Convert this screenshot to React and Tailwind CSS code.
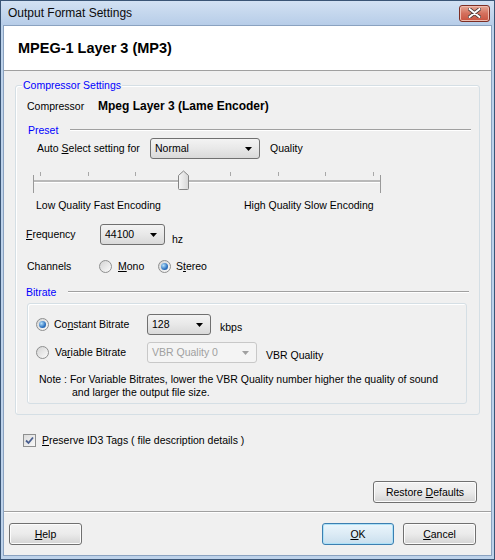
import React from "react";

function U({ children }) {
  return <span className="underline underline-offset-[1px]">{children}</span>;
}

function Arrow({ disabled }) {
  return (
    <svg width="7" height="4" viewBox="0 0 7 4" className="shrink-0">
      <path d="M0 0 H7 L3.5 4 Z" fill={disabled ? "#a0a0a0" : "#000"} />
    </svg>
  );
}

function Combo({ className, value, disabled }) {
  return (
    <div
      className={
        "h-[21px] shrink-0 rounded-[3px] border flex items-center pl-[4px] pr-[7px] " +
        (disabled
          ? "border-[#c8c8c8] bg-[#f4f4f4] text-[#a0a0a0] "
          : "border-[#707070] bg-linear-to-b from-[#f3f3f3] via-[#e8e8e8] to-[#d9d9d9] text-black ") +
        className
      }
    >
      <span className="flex-1 leading-none">{value}</span>
      <Arrow disabled={disabled} />
    </div>
  );
}

function Radio({ checked }) {
  return (
    <span className="w-[13px] h-[13px] shrink-0 rounded-full border border-[#8e8f8f] bg-linear-to-br from-[#d4d4d4] to-[#fbfbfb] flex items-center justify-center">
      {checked && (
        <span className="w-[7px] h-[7px] rounded-full bg-[radial-gradient(circle_at_35%_35%,#b8e2fb,#2c72c0_60%,#1b4f95)]" />
      )}
    </span>
  );
}

function Button({ className, children, focused }) {
  return (
    <div
      className={
        "h-[22px] shrink-0 rounded-[3px] border flex items-center justify-center leading-none " +
        (focused
          ? "border-[#3c7fb1] bg-linear-to-b from-[#eaf6fd] via-[#dcebf5] to-[#c9dfee] shadow-[inset_0_0_0_1px_#aee1f7] "
          : "border-[#707070] bg-linear-to-b from-[#f2f2f2] via-[#ebebeb] to-[#d4d4d4] shadow-[inset_0_0_0_1px_#fcfcfc] ") +
        className
      }
    >
      {children}
    </div>
  );
}

function Slider() {
  const ticks = [10, 58, 105, 153, 200, 248, 295, 343];
  return (
    <svg width="360" height="36" viewBox="0 0 360 36" className="ml-[14px] mt-[5px] block">
      <defs>
        <linearGradient id="thumb" x1="0" y1="0" x2="1" y2="0">
          <stop offset="0" stopColor="#f7f7f7" />
          <stop offset="1" stopColor="#d6d6d6" />
        </linearGradient>
      </defs>
      {ticks.map((x) => (
        <line key={x} x1={x + 0.5} y1="8" x2={x + 0.5} y2="12" stroke="#a8a8a8" strokeWidth="1" />
      ))}
      <rect x="3" y="16" width="348" height="2" fill="#b9b9b9" />
      <rect x="3" y="18" width="348" height="1" fill="#ffffff" />
      <line x1="3.5" y1="11" x2="3.5" y2="29" stroke="#9a9a9a" />
      <line x1="350.5" y1="11" x2="350.5" y2="29" stroke="#9a9a9a" />
      <path
        d="M148.5 24.5 V11.5 L153.5 7 L158.5 11.5 V24.5 Q158.5 25.5 157.5 25.5 H149.5 Q148.5 25.5 148.5 24.5 Z"
        fill="url(#thumb)"
        stroke="#858585"
      />
    </svg>
  );
}

export default function App() {
  return (
    <div className="w-[495px] h-[560px] bg-[#bdd2ea] border border-[#3a5576] flex flex-col text-[10.5px] text-black font-['Liberation_Sans',Arial,sans-serif] overflow-hidden">
      {/* Title bar */}
      <div className="h-[24px] shrink-0 flex items-center pl-[7px] pr-[4px] bg-linear-to-b from-[#d2e1f3] to-[#b7cde8]">
        <span className="text-[12px] leading-none text-[#0b0b0b]">Output Format Settings</span>
        <div className="ml-auto w-[31px] h-[17px] rounded-[3px] border border-[#7d2e24] bg-linear-to-b from-[#e6a896] via-[#d4705d] to-[#c9533f] flex items-center justify-center shadow-[inset_0_0_0_1px_#eebcb0]">
          <svg width="13" height="10" viewBox="0 0 13 10">
            <path d="M1.5 1 L11.5 9 M11.5 1 L1.5 9" stroke="#4a3a38" strokeWidth="3.6" strokeLinecap="round" />
            <path d="M1.5 1 L11.5 9 M11.5 1 L1.5 9" stroke="#ffffff" strokeWidth="2" strokeLinecap="round" />
          </svg>
        </div>
      </div>

      {/* Client */}
      <div className="flex-1 mx-[2px] mb-[3px] flex flex-col border border-[#8aa2c0] overflow-hidden">
        <div className="h-[45px] shrink-0 bg-white border-b border-[#a0a0a0] flex items-center pl-[14px]">
          <span className="text-[14.5px] font-bold leading-none">MPEG-1 Layer 3 (MP3)</span>
        </div>

        <div className="flex-1 bg-[#f0f0f0] flex flex-col">
          {/* Group box */}
          <div className="relative ml-[11px] mt-[14px] w-[465px] h-[330px] shrink-0 rounded-[3px] border border-[#d5dfe5] shadow-[inset_1px_1px_0_#ffffff] flex flex-col">
            <span className="absolute left-[6px] top-[-7px] px-[1px] bg-[#f0f0f0] text-[#0000ff] leading-[13px]">
              Compressor Settings
            </span>

            {/* Compressor */}
            <div className="h-[20px] mt-[10px] flex items-center pl-[11px]">
              <span className="w-[71px] leading-none">Compressor</span>
              <span className="font-bold text-[12px] leading-none">Mpeg Layer 3 (Lame Encoder)</span>
            </div>

            {/* Preset */}
            <div className="h-[16px] mt-[6px] flex items-center pl-[12px] pr-[8px]">
              <span className="w-[42px] text-[#0000ff] leading-none">Preset</span>
              <div className="flex-1 border-t border-[#a0a0a0] border-b border-b-white" />
            </div>

            {/* Auto select */}
            <div className="h-[21px] flex items-center pl-[21px]">
              <span className="w-[113px] leading-none">
                Auto <U>S</U>elect setting for
              </span>
              <Combo className="w-[110px]" value="Normal" />
              <span className="ml-[10px] leading-none">Quality</span>
            </div>

            <Slider />

            <div className="h-[14px] mt-[-2px] flex items-center pl-[20px]">
              <span className="w-[208px] leading-none">Low Quality Fast Encoding</span>
              <span className="leading-none">High Quality Slow Encoding</span>
            </div>

            {/* Frequency */}
            <div className="h-[21px] mt-[12px] flex items-center pl-[10px]">
              <span className="w-[74px] leading-none">
                <U>F</U>requency
              </span>
              <Combo className="w-[65px]" value="44100" />
              <span className="ml-[7px] mt-[10px] leading-none">hz</span>
            </div>

            {/* Channels */}
            <div className="h-[16px] mt-[13px] flex items-center pl-[11px]">
              <span className="w-[72px] leading-none">Channels</span>
              <Radio />
              <span className="ml-[6px] w-[40px] leading-none">
                <U>M</U>ono
              </span>
              <Radio checked />
              <span className="ml-[5px] leading-none">
                S<U>t</U>ereo
              </span>
            </div>

            {/* Bitrate */}
            <div className="h-[16px] mt-[10px] flex items-center pl-[10px] pr-[10px]">
              <span className="w-[42px] text-[#0000ff] leading-none">Bitrate</span>
              <div className="flex-1 border-t border-[#a0a0a0] border-b border-b-white" />
            </div>

            <div className="ml-[11px] mt-[3px] w-[440px] h-[101px] rounded-[3px] border border-[#d5dfe5] shadow-[inset_1px_1px_0_#ffffff] flex flex-col">
              <div className="h-[21px] mt-[10px] flex items-center pl-[8px]">
                <Radio checked />
                <span className="ml-[5px] w-[93px] leading-none">
                  Co<U>n</U>stant Bitrate
                </span>
                <Combo className="w-[64px]" value="128" />
                <span className="ml-[9px] mt-[6px] leading-none">kbps</span>
              </div>
              <div className="h-[21px] mt-[7px] flex items-center pl-[8px]">
                <Radio />
                <span className="ml-[6px] w-[92px] leading-none">
                  Va<U>r</U>iable Bitrate
                </span>
                <Combo className="w-[110px]" value="VBR Quality 0" disabled />
                <span className="ml-[9px] mt-[5px] leading-none">VBR Quality</span>
              </div>
              <div className="mt-[10px] pl-[11px] leading-[13px]">
                <div>Note : For Variable Bitrates, lower the VBR Quality number higher the quality of sound</div>
                <div className="pl-[33px]">and larger the output file size.</div>
              </div>
            </div>
          </div>

          {/* Checkbox */}
          <div className="h-[16px] mt-[17px] flex items-center pl-[19px]">
            <span className="w-[13px] h-[13px] border border-[#8e8f8f] bg-linear-to-br from-[#dcdcdc] to-[#f8f8f8] flex items-center justify-center">
              <svg width="9" height="9" viewBox="0 0 9 9">
                <path d="M1 4.5 L3.5 7 L8 1.5" fill="none" stroke="#4a5f8f" strokeWidth="1.8" />
              </svg>
            </span>
            <span className="ml-[6px] leading-none">
              <U>P</U>reserve ID3 Tags ( file description details )
            </span>
          </div>

          {/* Restore defaults */}
          <div className="mt-[33px] flex justify-end pr-[14px]">
            <Button className="w-[104px]">
              <span>
                Restore <U>D</U>efaults
              </span>
            </Button>
          </div>

          <div className="mt-[8px] border-t border-[#a0a0a0] border-b border-b-white" />

          <div className="mt-[10px] flex items-center pl-[5px] pr-[15px]">
            <Button className="w-[73px]">
              <span>
                <U>H</U>elp
              </span>
            </Button>
            <Button className="w-[72px] ml-auto" focused>
              <span>
                <U>O</U>K
              </span>
            </Button>
            <Button className="w-[73px] ml-[9px]">
              <span>
                <U>C</U>ancel
              </span>
            </Button>
          </div>
        </div>
      </div>
    </div>
  );
}
